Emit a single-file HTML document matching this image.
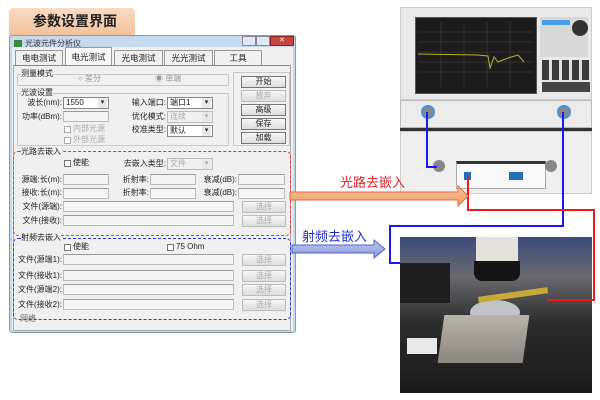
<!DOCTYPE html>
<html><head><meta charset="utf-8"><style>
*{margin:0;padding:0;box-sizing:border-box}
body{width:600px;height:400px;background:#fff;position:relative;overflow:hidden;font-family:"Liberation Sans","Noto Sans CJK SC",sans-serif;font-size:8px;color:#222}
.a{position:absolute}
.t{position:absolute;white-space:nowrap;line-height:10px;font-size:8px}
.r{text-align:right}
.in{position:absolute;height:11px;background:#f4f4f4;border:1px solid #bbb;border-top-color:#999}
.inw{background:#fff}
.sel{position:absolute;height:12px;background:#fff;border:1px solid #888;font-size:8px;line-height:10px;padding-left:2px}
.sel:after{content:"▾";position:absolute;right:1px;top:0;width:9px;height:10px;background:#e8e8e8;font-size:7px;text-align:center}
.dis{color:#aaa;background:#f0f0f0;border-color:#bbb}
.btn{position:absolute;height:12px;background:linear-gradient(#f6f6f6,#dcdcdc);border:1px solid #777;text-align:center;line-height:10px;font-size:8px}
.bd{color:#aaa;border-color:#bbb}
.cb{position:absolute;width:7px;height:7px;border:1px solid #777;background:#fff}
.grp{position:absolute;border:1px solid #c8c8c8}
.tab{position:absolute;top:50px;height:15px;background:#f0f0f0;border:1px solid #999;border-bottom:none;text-align:center;line-height:14px;font-size:8.5px}
</style></head><body>

<!-- title label -->
<div class="a" style="left:9px;top:8px;width:126px;height:30px;border-radius:4px;background:linear-gradient(#f9dcc4,#f2bf98);"></div>
<div class="t" style="left:33px;top:12px;font-size:14px;line-height:18px;font-weight:bold;color:#222">参数设置界面</div>

<!-- window -->
<div class="a" style="left:9px;top:35px;width:287px;height:298px;background:#c5d9ee;border:1px solid #7f9db9;border-radius:3px"></div>
<div class="a" style="left:14px;top:40px;width:8px;height:7px;background:#3a8a3a"></div>
<div class="t" style="left:25px;top:39px;color:#333">光波元件分析仪</div>
<div class="a" style="left:242px;top:36px;width:14px;height:10px;background:#dfe8f2;border:1px solid #889"></div>
<div class="a" style="left:256px;top:36px;width:14px;height:10px;background:#dfe8f2;border:1px solid #889"></div>
<div class="a" style="left:270px;top:36px;width:24px;height:10px;background:#c8453a;border:1px solid #822;color:#fff;font-size:7px;text-align:center;line-height:8px">✕</div>
<div class="a" style="left:12px;top:47px;width:281px;height:284px;background:#f0f0f0"></div>

<div class="tab" style="left:15px;width:48px">电电测试</div>
<div class="tab" style="left:65px;width:47px;top:47px;height:19px;background:#f8f8f8;line-height:18px">电光测试</div>
<div class="tab" style="left:114px;width:49px">光电测试</div>
<div class="tab" style="left:164px;width:49px">光光测试</div>
<div class="tab" style="left:214px;width:48px">工具</div>
<div class="a" style="left:13px;top:65px;width:278px;height:266px;border:1px solid #aaa;border-top-color:#888"></div>

<!-- 测量模式 -->
<div class="grp" style="left:17px;top:74px;width:212px;height:12px"></div>
<div class="t" style="left:21px;top:69px;background:#f0f0f0">测量模式</div>
<div class="t" style="left:78px;top:74px;color:#999">○ 差分</div>
<div class="t" style="left:155px;top:74px;color:#999">◉ 单端</div>

<!-- buttons -->
<div class="grp" style="left:233px;top:72px;width:57px;height:74px"></div>
<div class="btn" style="left:241px;top:76px;width:45px">开始</div>
<div class="btn bd" style="left:241px;top:90px;width:45px">放弃</div>
<div class="btn" style="left:241px;top:104px;width:45px">高级</div>
<div class="btn" style="left:241px;top:118px;width:45px">保存</div>
<div class="btn" style="left:241px;top:132px;width:45px">加载</div>

<!-- 光波设置 -->
<div class="grp" style="left:17px;top:93px;width:212px;height:53px"></div>
<div class="t" style="left:21px;top:88px;background:#f0f0f0">光波设置</div>
<div class="t r" style="left:10px;width:52px;top:98px">波长(nm):</div>
<div class="sel" style="left:63px;top:97px;width:46px">1550</div>
<div class="t r" style="left:10px;width:52px;top:112px">功率(dBm):</div>
<div class="in" style="left:63px;top:111px;width:46px"></div>
<div class="cb" style="left:64px;top:126px;border-color:#aaa"></div><div class="t" style="left:73px;top:124px;color:#aaa">内部光源</div>
<div class="cb" style="left:64px;top:137px;border-color:#aaa"></div><div class="t" style="left:73px;top:135px;color:#aaa">外部光源</div>
<div class="t r" style="left:110px;width:56px;top:98px">输入端口:</div>
<div class="sel" style="left:167px;top:97px;width:46px">端口1</div>
<div class="t r" style="left:110px;width:56px;top:112px">优化模式:</div>
<div class="sel dis" style="left:167px;top:111px;width:46px">连续</div>
<div class="t r" style="left:110px;width:56px;top:125px">校准类型:</div>
<div class="sel" style="left:167px;top:125px;width:46px">默认</div>

<!-- red dashed -->
<div class="a" style="left:13px;top:151px;width:278px;height:85px;border:1.5px dashed #e8342c;border-radius:5px"></div>
<div class="t" style="left:21px;top:147px;background:#f0f0f0">光路去嵌入</div>
<div class="cb" style="left:64px;top:160px"></div><div class="t" style="left:73px;top:158px">使能</div>
<div class="t r" style="left:110px;width:56px;top:159px">去嵌入类型:</div>
<div class="sel dis" style="left:167px;top:158px;width:46px">文件</div>
<div class="t r" style="left:10px;width:52px;top:175px">源端:长(m):</div>
<div class="in" style="left:63px;top:174px;width:46px"></div>
<div class="t r" style="left:110px;width:39px;top:175px">折射率:</div>
<div class="in" style="left:150px;top:174px;width:46px"></div>
<div class="t r" style="left:200px;width:37px;top:175px">衰减(dB):</div>
<div class="in" style="left:238px;top:174px;width:47px"></div>
<div class="t r" style="left:10px;width:52px;top:188px">接收:长(m):</div>
<div class="in" style="left:63px;top:188px;width:46px"></div>
<div class="t r" style="left:110px;width:39px;top:188px">折射率:</div>
<div class="in" style="left:150px;top:188px;width:46px"></div>
<div class="t r" style="left:200px;width:37px;top:188px">衰减(dB):</div>
<div class="in" style="left:238px;top:188px;width:47px"></div>
<div class="t r" style="left:10px;width:52px;top:202px">文件(源端):</div>
<div class="in" style="left:63px;top:201px;width:171px"></div>
<div class="btn bd" style="left:242px;top:201px;width:44px">选择</div>
<div class="t r" style="left:10px;width:52px;top:216px">文件(接收):</div>
<div class="in" style="left:63px;top:215px;width:171px"></div>
<div class="btn bd" style="left:242px;top:215px;width:44px">选择</div>

<!-- blue dashed -->
<div class="a" style="left:13px;top:238px;width:278px;height:82px;border:1.5px dashed #2b3ae0;border-radius:5px"></div>
<div class="t" style="left:21px;top:233px;background:#f0f0f0">射频去嵌入</div>
<div class="cb" style="left:64px;top:244px"></div><div class="t" style="left:73px;top:242px">使能</div>
<div class="cb" style="left:167px;top:244px"></div><div class="t" style="left:176px;top:242px">75 Ohm</div>
<div class="t r" style="left:8px;width:54px;top:255px">文件(源端1):</div>
<div class="in" style="left:63px;top:254px;width:171px"></div>
<div class="btn bd" style="left:242px;top:254px;width:44px">选择</div>
<div class="t r" style="left:8px;width:54px;top:271px">文件(接收1):</div>
<div class="in" style="left:63px;top:270px;width:171px"></div>
<div class="btn bd" style="left:242px;top:270px;width:44px">选择</div>
<div class="t r" style="left:8px;width:54px;top:285px">文件(源端2):</div>
<div class="in" style="left:63px;top:284px;width:171px"></div>
<div class="btn bd" style="left:242px;top:284px;width:44px">选择</div>
<div class="t r" style="left:8px;width:54px;top:300px">文件(接收2):</div>
<div class="in" style="left:63px;top:299px;width:171px"></div>
<div class="btn bd" style="left:242px;top:299px;width:44px">选择</div>
<div class="t" style="left:20px;top:314px;color:#666">网络</div>

<!-- instrument -->
<div class="a" style="left:400px;top:7px;width:192px;height:93px;background:#e9e9e9;border:1px solid #ccc"></div>
<div class="a" style="left:415px;top:17px;width:122px;height:77px;background:#1c1c1c;border:1px solid #555"></div>
<svg class="a" style="left:418px;top:22px" width="115" height="65"><g stroke="#444" stroke-width="0.5">
<line x1="0" y1="10" x2="115" y2="10"/><line x1="0" y1="20" x2="115" y2="20"/><line x1="0" y1="30" x2="115" y2="30"/><line x1="0" y1="40" x2="115" y2="40"/><line x1="0" y1="50" x2="115" y2="50"/>
<line x1="23" y1="0" x2="23" y2="65"/><line x1="46" y1="0" x2="46" y2="65"/><line x1="69" y1="0" x2="69" y2="65"/><line x1="92" y1="0" x2="92" y2="65"/></g>
<path d="M0 32 L60 33 L70 34 L72 46 L76 35 L80 40 L90 36 L100 33 L106 40" stroke="#b8b030" fill="none" stroke-width="1"/></svg>
<div class="a" style="left:540px;top:17px;width:48px;height:40px;background:#d8d8d8"></div>
<div class="a" style="left:572px;top:20px;width:16px;height:16px;border-radius:50%;background:#333"></div>
<div class="a" style="left:542px;top:20px;width:28px;height:5px;background:#4a9ee8"></div>
<div class="a" style="left:542px;top:60px;width:48px;height:20px;background:repeating-linear-gradient(90deg,#3a3a3a 0 7px,#e0e0e0 7px 10px)"></div>
<div class="a" style="left:542px;top:82px;width:48px;height:10px;background:#444"></div>
<div class="a" style="left:400px;top:100px;width:192px;height:28px;background:#ececec;border:1px solid #bbb"></div>
<div class="a" style="left:421px;top:105px;width:14px;height:14px;border-radius:50%;background:#888;border:2px solid #4a90d8"></div>
<div class="a" style="left:557px;top:105px;width:14px;height:14px;border-radius:50%;background:#888;border:2px solid #4a90d8"></div>
<div class="a" style="left:400px;top:128px;width:192px;height:3px;background:#333"></div>
<div class="a" style="left:400px;top:131px;width:192px;height:63px;background:#efefef;border:1px solid #ccc"></div>
<div class="a" style="left:456px;top:161px;width:90px;height:28px;background:#f8f8f8;border:1px solid #aaa;border-top:3px solid #333"></div>
<div class="a" style="left:433px;top:160px;width:12px;height:12px;border-radius:50%;background:#888"></div>
<div class="a" style="left:545px;top:160px;width:12px;height:12px;border-radius:50%;background:#888"></div>
<div class="a" style="left:464px;top:172px;width:7px;height:8px;background:#2a6bb8"></div>
<div class="a" style="left:509px;top:172px;width:14px;height:8px;background:#2a6bb8"></div>

<!-- photo -->
<div class="a" style="left:400px;top:237px;width:192px;height:156px;background:linear-gradient(#3a4a7a 0,#6a6a70 25%,#2c2c2c 55%,#1a1a1a 100%)"></div>
<div class="a" style="left:476px;top:237px;width:42px;height:26px;background:#e4e0da"></div>
<div class="a" style="left:474px;top:261px;width:46px;height:20px;background:#151515;border-radius:0 0 8px 8px"></div>
<div class="a" style="left:400px;top:263px;width:50px;height:40px;background:#1e1e1e"></div>
<div class="a" style="left:470px;top:300px;width:50px;height:25px;background:#c0c4c8;border-radius:50%"></div>
<div class="a" style="left:441px;top:315px;width:85px;height:48px;background:linear-gradient(#b8b4aa,#8a8680);transform:skewX(-8deg)"></div>
<div class="a" style="left:478px;top:292px;width:70px;height:6px;background:#c8a838;transform:rotate(-8deg)"></div>
<div class="a" style="left:407px;top:338px;width:30px;height:16px;background:#e8e8e8"></div>

<!-- lines -->
<svg class="a" style="left:0;top:0" width="600" height="400">
<polyline points="427,112 427,167 437,167" fill="none" stroke="#1a1af0" stroke-width="2"/>
<polyline points="563,112 563,226 390,226 390,263 400,263" fill="none" stroke="#1a1af0" stroke-width="2"/>
<polyline points="468,178 468,210 594,210 594,300 547,300" fill="none" stroke="#f01a1a" stroke-width="2"/>
<defs><linearGradient id="og" x1="0" y1="0" x2="0" y2="1"><stop offset="0" stop-color="#f8c8a0"/><stop offset="1" stop-color="#ef9a60"/></linearGradient>
<linearGradient id="bg" x1="0" y1="0" x2="0" y2="1"><stop offset="0" stop-color="#c8d0f4"/><stop offset="1" stop-color="#8090d8"/></linearGradient></defs>
<polygon points="290,192 458,192 458,186 468,196 458,206 458,200 290,200" fill="url(#og)" stroke="#e56a40" stroke-width="1"/>
<polygon points="292,245 374,245 374,240 385,249 374,258 374,253 292,253" fill="url(#bg)" stroke="#5060c8" stroke-width="1"/>
</svg>
<div class="t" style="left:340px;top:175px;font-size:13px;line-height:15px;color:#e8202a">光路去嵌入</div>
<div class="t" style="left:302px;top:229px;font-size:13px;line-height:15px;color:#2030d0">射频去嵌入</div>
</body></html>
